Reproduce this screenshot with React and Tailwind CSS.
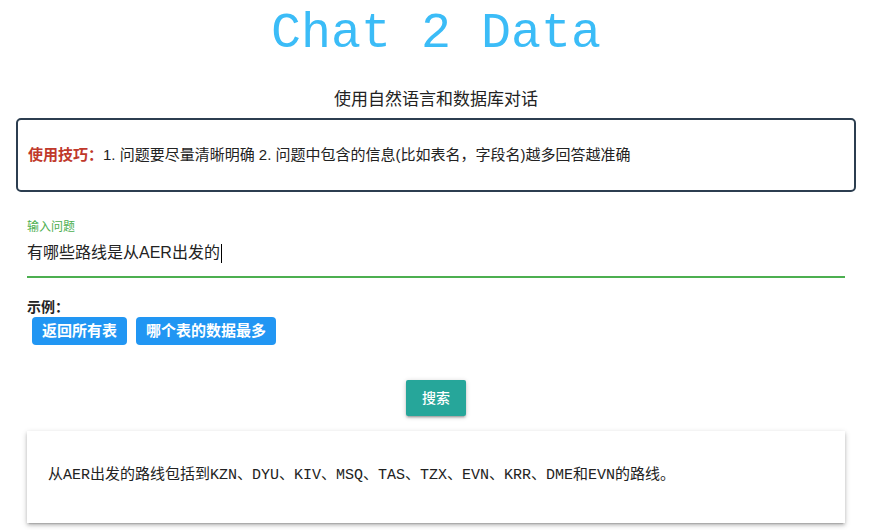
export default function App() {
  const sans = "font-['Liberation_Sans','Noto_Sans_CJK_SC',sans-serif]";
  return (
    <div className={`w-[872px] min-h-[530px] bg-white text-[#333] ${sans}`}>
      <h1 className="pt-[9px] text-center font-['Liberation_Mono','Noto_Sans_CJK_SC',monospace] text-[50px] leading-[50px] text-[#3bbcf7]">
        Chat 2 Data
      </h1>
      <p className="mt-[29px] text-center text-[17px] leading-6 text-[#222]">使用自然语言和数据库对话</p>
      <div className="mx-4 mt-[6px] rounded-[5px] border-2 border-[#2c3e50] px-[10px] py-[25px] text-[15px] leading-5 text-[#222]">
        <span className="font-bold text-[#c0392b]">使用技巧：</span>
        1. 问题要尽量清晰明确 2. 问题中包含的信息(比如表名，字段名)越多回答越准确
      </div>
      <div className="mx-[27px] mt-[27px]">
        <div className="text-xs leading-4 text-[#4caf50]">输入问题</div>
        <div className="mt-[6px] flex items-center border-b-2 border-[#4caf50] pb-[11px] text-base leading-6 text-[#222]">
          <span>有哪些路线是从AER出发的</span>
          <span className="ml-[1px] inline-block h-[19px] w-[1px] bg-black" />
        </div>
        <div className="mt-[19px] text-sm font-bold leading-5 text-[#222]">示例：</div>
        <div className="flex gap-[9px] pl-[5px]">
          <button className="h-[28px] rounded-[4px] bg-[#2196f3] px-[10px] text-[15px] font-semibold leading-[28px] text-white">
            返回所有表
          </button>
          <button className="h-[28px] rounded-[4px] bg-[#2196f3] px-[10px] text-[15px] font-semibold leading-[28px] text-white">
            哪个表的数据最多
          </button>
        </div>
        <div className="mt-[35px] flex justify-center">
          <button className="h-[36px] rounded-[2px] bg-[#26a69a] px-4 text-sm font-medium leading-[36px] text-white shadow-[0_2px_2px_0_rgba(0,0,0,0.14),0_3px_1px_-2px_rgba(0,0,0,0.12),0_1px_5px_0_rgba(0,0,0,0.2)]">
            搜索
          </button>
        </div>
        <div className="mt-[15px] bg-white px-[21px] pt-[35px] pb-[37px] shadow-[0_2px_3px_0_rgba(0,0,0,0.14),0_3px_1px_-2px_rgba(0,0,0,0.12),0_2px_6px_0_rgba(0,0,0,0.2)]">
          <pre className="font-['Liberation_Mono','Noto_Sans_CJK_SC',monospace] text-[15px] leading-5 text-[#222]">
            从AER出发的路线包括到KZN、DYU、KIV、MSQ、TAS、TZX、EVN、KRR、DME和EVN的路线。
          </pre>
        </div>
      </div>
    </div>
  );
}
